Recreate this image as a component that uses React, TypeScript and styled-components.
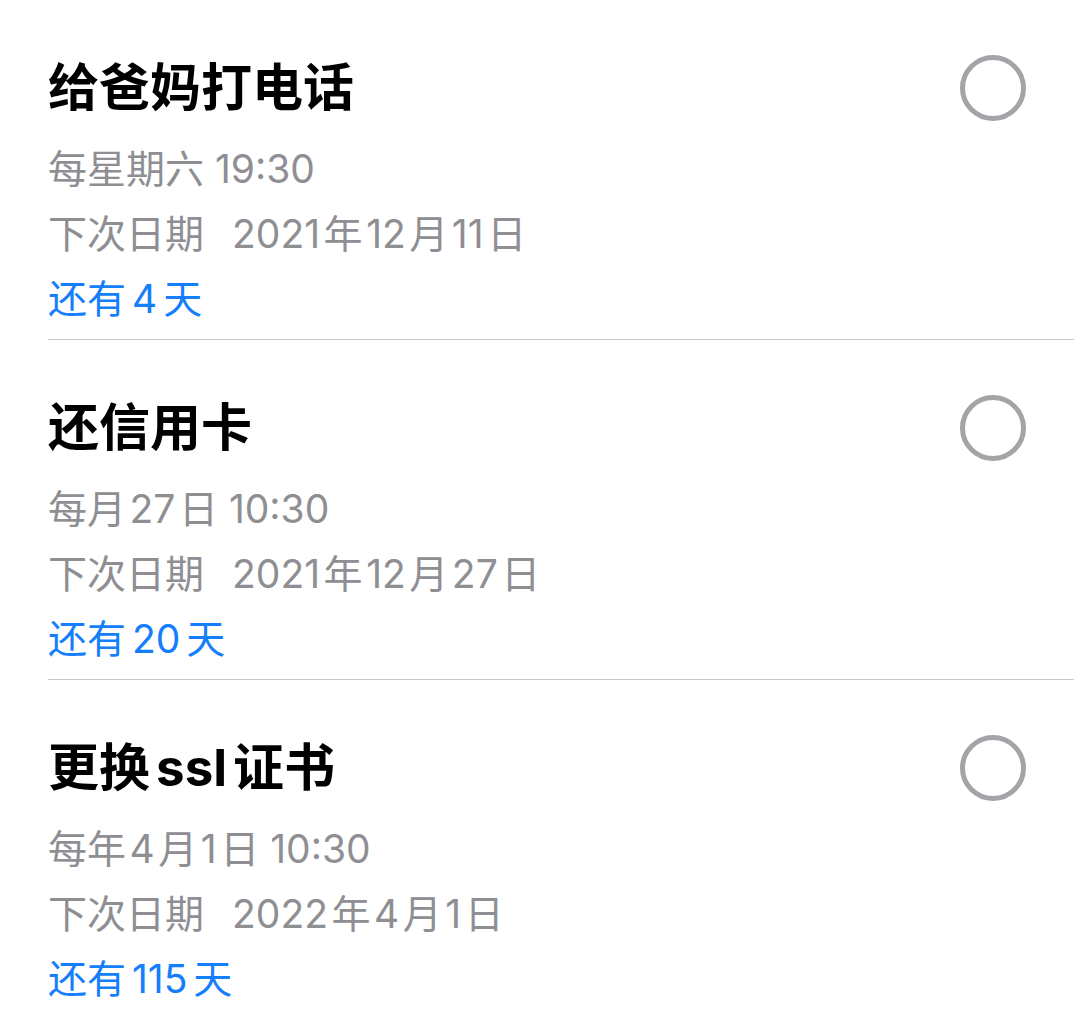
import React from "react";
import styled, { createGlobalStyle } from "styled-components";

const Global = createGlobalStyle`
  html, body { margin: 0; padding: 0; background: #ffffff; }
  body { font-family: Inter, "Noto Sans CJK SC", sans-serif; -webkit-font-smoothing: antialiased; }
`;

const List = styled.div`
  display: flex;
  flex-direction: column;
  width: 1074px;
`;

const Item = styled.div<{ $last?: boolean }>`
  margin-left: 48px;
  padding: 52px 48px 8px 0;
  border-bottom: ${(p) => (p.$last ? "none" : "1px solid #c8c8cc")};
`;

const TitleRow = styled.div`
  display: flex;
  align-items: center;
  justify-content: space-between;
  height: 72px;
`;

const Title = styled.div`
  font-family: Inter, "Noto Sans CJK SC", sans-serif;
  font-size: 51px;
  font-weight: 700;
  color: #000000;
  line-height: 72px;
  word-spacing: -6px;
`;

const Check = styled.div`
  width: 56px;
  height: 56px;
  border: 5px solid #a3a3a8;
  border-radius: 50%;
  flex-shrink: 0;
`;

const Lines = styled.div`
  margin-top: 12px;
  display: flex;
  flex-direction: column;
`;

const Line = styled.div<{ $accent?: boolean }>`
  font-family: Inter, "Noto Sans CJK SC", sans-serif;
  font-size: 39px;
  line-height: 65px;
  color: ${(p) => (p.$accent ? "#147efb" : "#8e8e93")};
  word-spacing: ${(p) => (p.$accent ? "-5px" : "0")};
  white-space: nowrap;
`;

const Label = styled.span`
  margin-right: 28px;
`;

const h = "\u200A";

const items = [
  {
    title: "给爸妈打电话",
    repeat: "每星期六 19:30",
    next: `2021${h}年${h}12${h}月${h}11${h}日`,
    left: "还有 4 天",
  },
  {
    title: "还信用卡",
    repeat: `每月${h}27${h}日 10:30`,
    next: `2021${h}年${h}12${h}月${h}27${h}日`,
    left: "还有 20 天",
  },
  {
    title: "更换 ssl 证书",
    repeat: `每年${h}4${h}月${h}1${h}日 10:30`,
    next: `2022${h}年${h}4${h}月${h}1${h}日`,
    left: "还有 115 天",
  },
];

export default function App() {
  return (
    <>
      <Global />
      <List>
        {items.map((it, i) => (
          <Item key={i} $last={i === items.length - 1}>
            <TitleRow>
              <Title>{it.title}</Title>
              <Check />
            </TitleRow>
            <Lines>
              <Line>{it.repeat}</Line>
              <Line>
                <Label>下次日期</Label>
                {it.next}
              </Line>
              <Line $accent>{it.left}</Line>
            </Lines>
          </Item>
        ))}
      </List>
    </>
  );
}
